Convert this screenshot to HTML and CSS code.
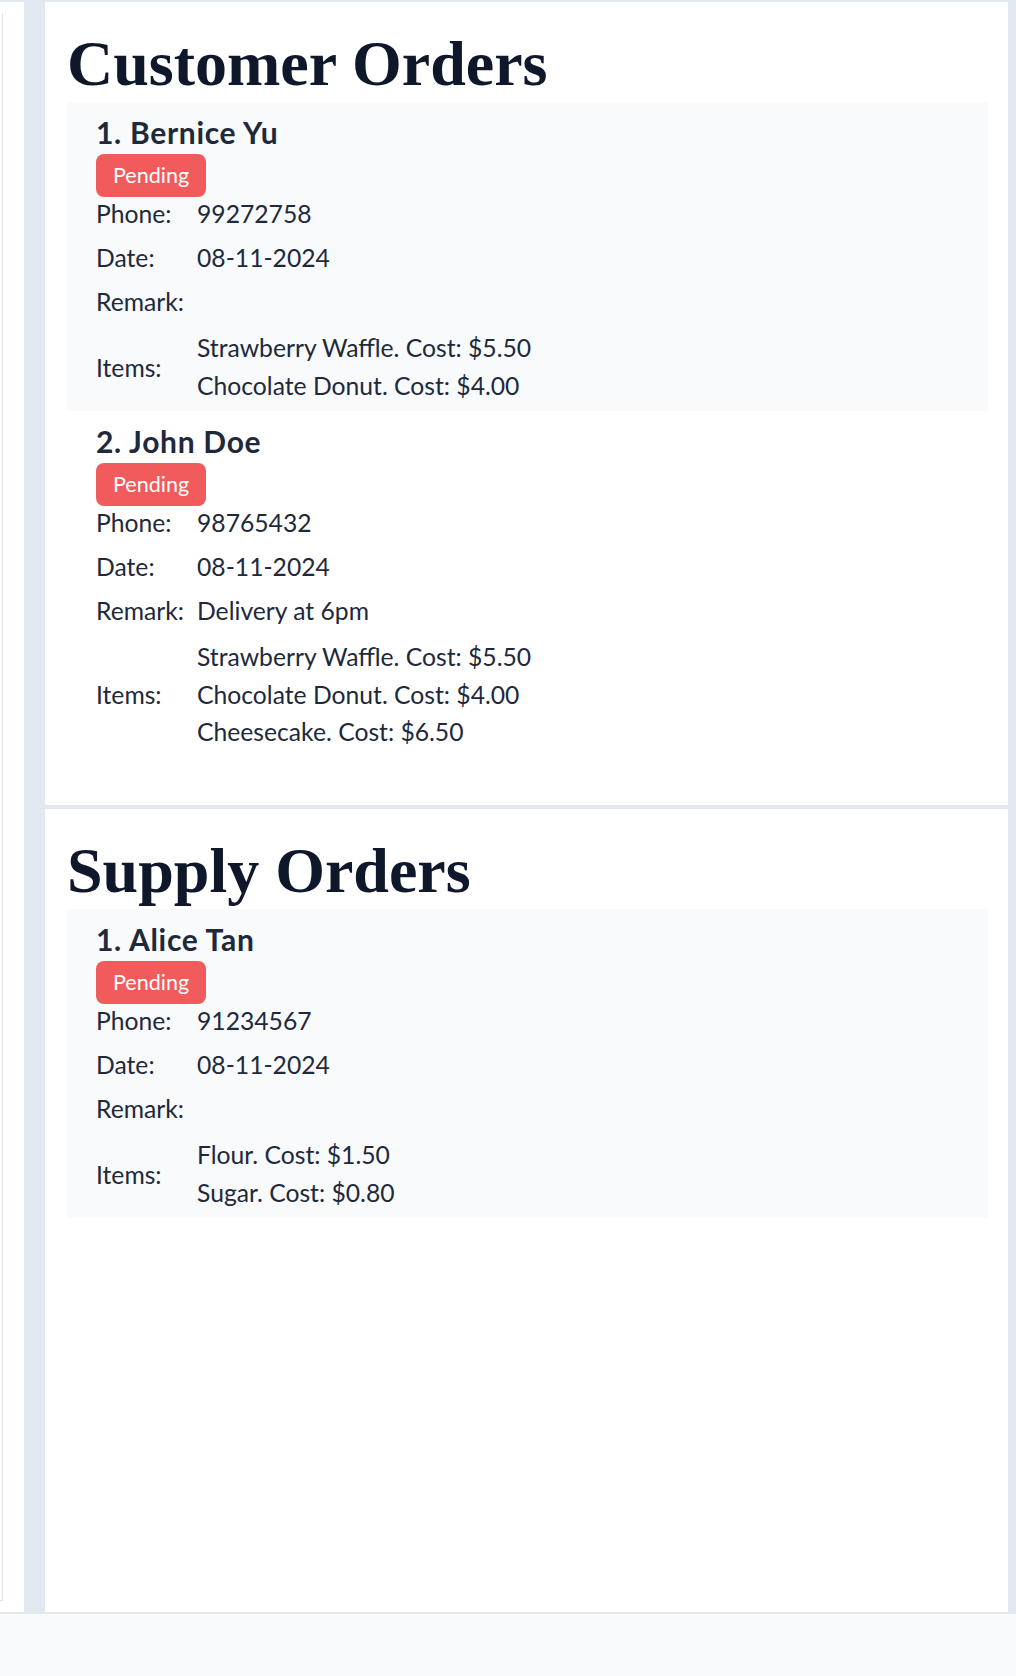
FILE: index.html
```html
<!DOCTYPE html>
<html lang="en">
<head>
<meta charset="utf-8">
<title>Orders</title>
<link rel="stylesheet" href="styles.css">
</head>
<body>
<div class="app">
  <aside class="sidebar"><div class="sidebar-card"></div></aside>
  <main class="main">
    <section class="panel">
      <h2 class="panel-title">Customer Orders</h2>
      <div class="order-list">
        <article class="order">
          <h3 class="order-name">1. Bernice Yu</h3>
          <span class="badge">Pending</span>
          <div class="details">
            <div class="label">Phone:</div><div class="value">99272758</div>
            <div class="label">Date:</div><div class="value">08-11-2024</div>
            <div class="label">Remark:</div><div class="value"></div>
            <div class="label label-items">Items:</div>
            <div class="value items">
              <div>Strawberry Waffle. Cost: $5.50</div>
              <div>Chocolate Donut. Cost: $4.00</div>
            </div>
          </div>
        </article>
        <article class="order">
          <h3 class="order-name">2. John Doe</h3>
          <span class="badge">Pending</span>
          <div class="details">
            <div class="label">Phone:</div><div class="value">98765432</div>
            <div class="label">Date:</div><div class="value">08-11-2024</div>
            <div class="label">Remark:</div><div class="value">Delivery at 6pm</div>
            <div class="label label-items">Items:</div>
            <div class="value items">
              <div>Strawberry Waffle. Cost: $5.50</div>
              <div>Chocolate Donut. Cost: $4.00</div>
              <div>Cheesecake. Cost: $6.50</div>
            </div>
          </div>
        </article>
      </div>
    </section>
    <section class="panel">
      <h2 class="panel-title">Supply Orders</h2>
      <div class="order-list">
        <article class="order">
          <h3 class="order-name">1. Alice Tan</h3>
          <span class="badge">Pending</span>
          <div class="details">
            <div class="label">Phone:</div><div class="value">91234567</div>
            <div class="label">Date:</div><div class="value">08-11-2024</div>
            <div class="label">Remark:</div><div class="value"></div>
            <div class="label label-items">Items:</div>
            <div class="value items">
              <div>Flour. Cost: $1.50</div>
              <div>Sugar. Cost: $0.80</div>
            </div>
          </div>
        </article>
      </div>
    </section>
  </main>
</div>
</body>
</html>
```
FILE: styles.css
```css
html, body {
  margin: 0;
  padding: 0;
}
body {
  background: #f8fafc;
  font-family: Lato, "Open Sans", sans-serif;
  color: #1e293b;
}
.app {
  box-sizing: border-box;
  height: 1614px;
  display: flex;
  gap: 21px;
  padding: 2px 8px 2px 0;
  background: #e2e8f0;
}
.sidebar {
  width: 24px;
  flex: none;
  box-sizing: border-box;
  padding: 11px 0;
  background: #ffffff;
}
.sidebar-card {
  width: 3px;
  height: 100%;
  box-sizing: border-box;
  border-right: 1px solid #dfe5ee;
  border-bottom: 1px solid #dfe5ee;
}
.main {
  flex: 1;
  display: flex;
  flex-direction: column;
  gap: 4px;
  min-width: 0;
}
.panel {
  flex: 1;
  background: #ffffff;
  padding: 24px 20px 0 22px;
  overflow: hidden;
}
.panel-title {
  margin: 0;
  font-family: "Liberation Serif", "Times New Roman", serif;
  font-weight: 700;
  font-size: 64px;
  line-height: 76px;
  color: #0f172a;
}
.order {
  padding: 9px 29px 7px;
}
.order:nth-child(odd) {
  background: #f8fafc;
}
.order-name {
  margin: 0;
  font-size: 30px;
  font-weight: 700;
  letter-spacing: 0.7px;
  line-height: 43px;
  color: #1e293b;
}
.badge {
  display: inline-block;
  height: 43px;
  line-height: 43px;
  padding: 0 17px;
  border-radius: 8px;
  background: #f15b5b;
  color: #ffffff;
  font-size: 21.5px;
  vertical-align: top;
}
.details {
  display: grid;
  grid-template-columns: 101px 1fr;
  row-gap: 10px;
  font-size: 24.7px;
  line-height: 34px;
  color: #1e293b;
}
.label-items {
  align-self: center;
  padding-top: 2px;
}
.items {
  line-height: 37.5px;
}
```
